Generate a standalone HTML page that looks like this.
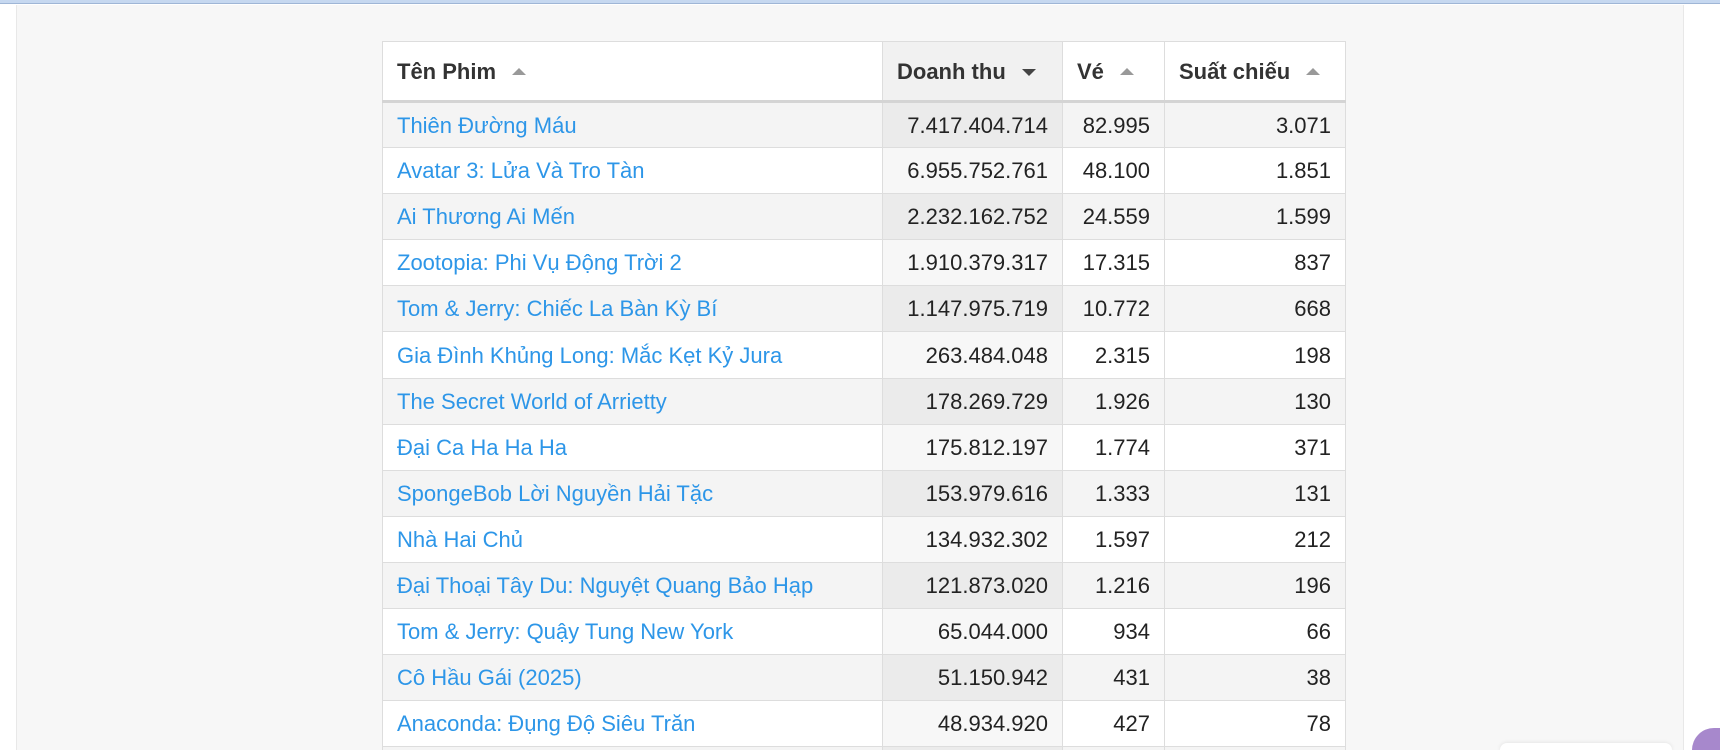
<!DOCTYPE html>
<html><head><meta charset="utf-8"><style>
*{margin:0;padding:0;box-sizing:border-box}
html,body{width:1720px;height:750px;overflow:hidden}
body{background:#fff;font-family:"Liberation Sans",sans-serif;position:relative}
.top{position:absolute;left:0;top:0;width:1720px;height:4px;background:#c6d8f0;border-bottom:1px solid #9fb6d6}
.main{position:absolute;left:16px;top:5px;width:1668px;height:745px;background:#f7f7f7;border-left:1px solid #e8e8e8;border-right:1px solid #e8e8e8}
.wrap{position:absolute;left:382px;top:41px;width:970px;height:709px;overflow:hidden}
table{border-collapse:collapse;background:#fff;font-size:22px}
th,td{border:1px solid #ddd;padding:0 14px;white-space:nowrap}
th{height:60px;text-align:left;color:#333;font-weight:bold;font-size:22px;border-bottom:3px solid #d4d4d4;padding-top:2px}
td{height:46.1px;text-align:right;color:#222;padding-top:1px}
td:first-child{text-align:left;color:#2d96e8}
th.s{background:#f1f1f1}
tr:nth-child(odd) td{background:#f4f4f4}
tr:nth-child(odd) td.s{background:#ebebeb}
tr:nth-child(even) td.s{background:#f7f7f7}
.a{display:inline-block;width:0;height:0;border-left:7px solid transparent;border-right:7px solid transparent;border-bottom:7px solid #999;margin-left:16px;vertical-align:4px}
.d{border-bottom:0;border-top:7px solid #444;vertical-align:3px}
.pill{position:absolute;left:1500px;top:743px;width:172px;height:7px;background:#fff;border-radius:14px 14px 0 0;box-shadow:0 0 4px rgba(0,0,0,.1)}
.circ{position:absolute;left:1692px;top:728px;width:28px;height:22px;border-radius:35px 0 0 0;background:#a788cc}
</style></head><body>
<div class="top"></div>
<div class="main"></div>
<div class="wrap">
<table>
<colgroup><col style="width:500px"><col style="width:180px"><col style="width:102px"><col style="width:181px"></colgroup>
<thead><tr><th>Tên Phim<span class="a"></span></th><th class="s">Doanh thu<span class="a d"></span></th><th>Vé<span class="a"></span></th><th>Suất chiếu<span class="a"></span></th></tr></thead>
<tbody>
<tr><td>Thiên Đường Máu</td><td class="s">7.417.404.714</td><td>82.995</td><td>3.071</td></tr>
<tr><td>Avatar 3: Lửa Và Tro Tàn</td><td class="s">6.955.752.761</td><td>48.100</td><td>1.851</td></tr>
<tr><td>Ai Thương Ai Mến</td><td class="s">2.232.162.752</td><td>24.559</td><td>1.599</td></tr>
<tr><td>Zootopia: Phi Vụ Động Trời 2</td><td class="s">1.910.379.317</td><td>17.315</td><td>837</td></tr>
<tr><td>Tom &amp; Jerry: Chiếc La Bàn Kỳ Bí</td><td class="s">1.147.975.719</td><td>10.772</td><td>668</td></tr>
<tr><td>Gia Đình Khủng Long: Mắc Kẹt Kỷ Jura</td><td class="s">263.484.048</td><td>2.315</td><td>198</td></tr>
<tr><td>The Secret World of Arrietty</td><td class="s">178.269.729</td><td>1.926</td><td>130</td></tr>
<tr><td>Đại Ca Ha Ha Ha</td><td class="s">175.812.197</td><td>1.774</td><td>371</td></tr>
<tr><td>SpongeBob Lời Nguyền Hải Tặc</td><td class="s">153.979.616</td><td>1.333</td><td>131</td></tr>
<tr><td>Nhà Hai Chủ</td><td class="s">134.932.302</td><td>1.597</td><td>212</td></tr>
<tr><td>Đại Thoại Tây Du: Nguyệt Quang Bảo Hạp</td><td class="s">121.873.020</td><td>1.216</td><td>196</td></tr>
<tr><td>Tom &amp; Jerry: Quậy Tung New York</td><td class="s">65.044.000</td><td>934</td><td>66</td></tr>
<tr><td>Cô Hầu Gái (2025)</td><td class="s">51.150.942</td><td>431</td><td>38</td></tr>
<tr><td>Anaconda: Đụng Độ Siêu Trăn</td><td class="s">48.934.920</td><td>427</td><td>78</td></tr>
<tr><td>&nbsp;</td><td class="s"></td><td></td><td></td></tr>
</tbody></table>
</div>
<div class="pill"></div>
<div class="circ"></div>
</body></html>
